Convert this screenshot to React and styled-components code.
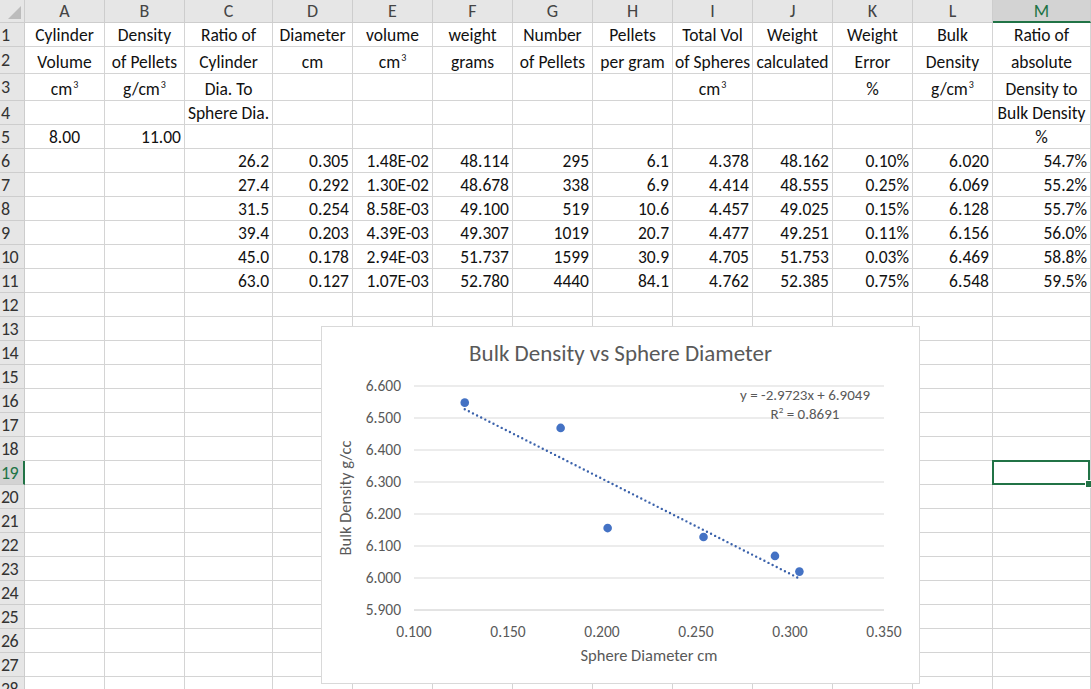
import React from 'react';
import styled, { createGlobalStyle } from 'styled-components';

const GlobalStyle = createGlobalStyle`
  html, body {
    margin: 0;
    padding: 0;
    background: #fff;
    overflow: hidden;
  }
  body {
    font-family: Carlito, Lato, "Liberation Sans", sans-serif;
  }
`;

const GREEN = '#217346';

const columns = [
  { key: 'A', w: 80 },
  { key: 'B', w: 80 },
  { key: 'C', w: 88 },
  { key: 'D', w: 80 },
  { key: 'E', w: 80 },
  { key: 'F', w: 80 },
  { key: 'G', w: 80 },
  { key: 'H', w: 80 },
  { key: 'I', w: 80 },
  { key: 'J', w: 80 },
  { key: 'K', w: 80 },
  { key: 'L', w: 80 },
  { key: 'M', w: 98 },
];

const cm3 = <>cm<sup>3</sup></>;
const gcm3 = <>g/cm<sup>3</sup></>;

// header rows: every cell centred
const headerRows = [
  ['Cylinder', 'Density', 'Ratio of', 'Diameter', 'volume', 'weight', 'Number', 'Pellets', 'Total Vol', 'Weight', 'Weight', 'Bulk', 'Ratio of'],
  ['Volume', 'of Pellets', 'Cylinder', 'cm', cm3, 'grams', 'of Pellets', 'per gram', 'of Spheres', 'calculated', 'Error', 'Density', 'absolute'],
  [cm3, gcm3, 'Dia. To', '', '', '', '', '', cm3, '', '%', gcm3, 'Density to'],
  ['', '', 'Sphere Dia.', '', '', '', '', '', '', '', '', '', 'Bulk Density'],
];

const dataRows = [
  ['26.2', '0.305', '1.48E-02', '48.114', '295', '6.1', '4.378', '48.162', '0.10%', '6.020', '54.7%'],
  ['27.4', '0.292', '1.30E-02', '48.678', '338', '6.9', '4.414', '48.555', '0.25%', '6.069', '55.2%'],
  ['31.5', '0.254', '8.58E-03', '49.100', '519', '10.6', '4.457', '49.025', '0.15%', '6.128', '55.7%'],
  ['39.4', '0.203', '4.39E-03', '49.307', '1019', '20.7', '4.477', '49.251', '0.11%', '6.156', '56.0%'],
  ['45.0', '0.178', '2.94E-03', '51.737', '1599', '30.9', '4.705', '51.753', '0.03%', '6.469', '58.8%'],
  ['63.0', '0.127', '1.07E-03', '52.780', '4440', '84.1', '4.762', '52.385', '0.75%', '6.548', '59.5%'],
];

const rowHeights = [24, 27, 27, 24, 24];

const Sheet = styled.div`
  position: relative;
  width: 1091px;
  height: 689px;
  overflow: hidden;
`;

const Row = styled.div`
  display: flex;
  height: ${p => p.$h}px;
`;

const Corner = styled.div`
  position: relative;
  flex: none;
  width: 25px;
  box-sizing: border-box;
  background: #e6e6e6;
  border-right: 1px solid #cdcdcd;
  border-bottom: 1px solid #cdcdcd;

  &::after {
    content: '';
    position: absolute;
    right: 3px;
    bottom: 3px;
    border-style: solid;
    border-width: 0 0 13px 13px;
    border-color: transparent transparent #bcbcbc transparent;
  }
`;

const ColHead = styled.div`
  flex: none;
  width: ${p => p.$w}px;
  box-sizing: border-box;
  display: flex;
  align-items: center;
  justify-content: center;
  background: ${p => (p.$active ? '#d3d3d3' : '#e6e6e6')};
  color: ${p => (p.$active ? GREEN : '#444')};
  font-size: 18px;
  border-right: 1px solid #cdcdcd;
  border-bottom: ${p => (p.$active ? `2px solid ${GREEN}` : '1px solid #cdcdcd')};
`;

const RowHead = styled.div`
  flex: none;
  width: 25px;
  box-sizing: border-box;
  display: flex;
  align-items: center;
  padding-left: 1px;
  background: ${p => (p.$active ? '#d3d3d3' : '#e6e6e6')};
  color: ${p => (p.$active ? GREEN : '#333')};
  font-size: 18px;
  letter-spacing: -0.5px;
  border-right: ${p => (p.$active ? `2px solid ${GREEN}` : '1px solid #cdcdcd')};
  border-bottom: 1px solid #cdcdcd;
  overflow: hidden;
`;

const Cell = styled.div`
  position: relative;
  flex: none;
  width: ${p => p.$w}px;
  box-sizing: border-box;
  display: flex;
  align-items: flex-end;
  justify-content: ${p => (p.$align === 'right' ? 'flex-end' : 'center')};
  padding: 0 3px 1px;
  font-size: 17.5px;
  line-height: 20px;
  color: #111;
  white-space: nowrap;
  border-right: 1px solid #d4d4d4;
  border-bottom: 1px solid #d4d4d4;

  sup {
    font-size: 10px;
    line-height: 0;
    vertical-align: 7px;
    margin-left: 1px;
  }

  ${p => p.$selected && `
    &::after {
      content: '';
      position: absolute;
      left: -1px;
      top: -1px;
      right: 0;
      bottom: -1px;
      border: 2px solid ${GREEN};
    }
    &::before {
      content: '';
      position: absolute;
      right: -3px;
      bottom: -4px;
      width: 6px;
      height: 6px;
      background: ${GREEN};
      border: 1px solid #fff;
      z-index: 1;
    }
  `}
`;

const Chart = styled.div`
  position: absolute;
  left: 321px;
  top: 326px;
  width: 599px;
  height: 358px;
  box-sizing: border-box;
  background: #fff;
  border: 1px solid #d9d9d9;
  display: flex;
  flex-direction: column;
`;

const ChartTitle = styled.div`
  height: 40px;
  padding-top: 6px;
  display: flex;
  align-items: center;
  justify-content: center;
  font-size: 23px;
  color: #595959;
`;

const Plot = styled.svg`
  display: block;
  font-family: Carlito, Lato, "Liberation Sans", sans-serif;
  fill: #595959;
`;

const points = [
  [0.305, 6.02],
  [0.292, 6.069],
  [0.254, 6.128],
  [0.203, 6.156],
  [0.178, 6.469],
  [0.127, 6.548],
];

// plot coordinates: page x - 322, page y - 373
const px = x => 92 + (x - 0.1) * 1880;
const py = y => 13 + (6.6 - y) * 320;
const trend = x => -2.9723 * x + 6.9049;

const yTicks = [6.6, 6.5, 6.4, 6.3, 6.2, 6.1, 6.0, 5.9];
const xTicks = [0.1, 0.15, 0.2, 0.25, 0.3, 0.35];

const ScatterChart = () => (
  <Chart>
    <ChartTitle>Bulk Density vs Sphere Diameter</ChartTitle>
    <Plot width="597" height="310" viewBox="0 0 597 310">
      {yTicks.map(t => (
        <g key={t}>
          <line x1="92" x2="562" y1={py(t)} y2={py(t)} stroke={t === 5.9 ? '#c8c8c8' : '#d9d9d9'} strokeWidth="1" />
          <text x="79" y={py(t) + 5} fontSize="15.5" textAnchor="end">{t.toFixed(3)}</text>
        </g>
      ))}
      {xTicks.map(t => (
        <text key={t} x={px(t)} y="264" fontSize="15.5" textAnchor="middle">{t.toFixed(3)}</text>
      ))}
      <line
        x1={px(0.127)} y1={py(trend(0.127))}
        x2={px(0.305)} y2={py(trend(0.305))}
        stroke="#3b62ab" strokeWidth="2.4" strokeLinecap="round" strokeDasharray="0 4.6"
      />
      {points.map(([x, y]) => (
        <circle key={x} cx={px(x)} cy={py(y)} r="4.3" fill="#4472c4" />
      ))}
      <text x="548" y="27" fontSize="15" textAnchor="end">y = -2.9723x + 6.9049</text>
      <text x="483" y="46" fontSize="15" textAnchor="middle">
        R<tspan dy="-6" fontSize="9">2</tspan><tspan dy="6"> = 0.8691</tspan>
      </text>
      <text x="327" y="288" fontSize="16.5" textAnchor="middle">Sphere Diameter cm</text>
      <text transform="translate(29 125) rotate(-90)" fontSize="16.5" textAnchor="middle">Bulk Density g/cc</text>
    </Plot>
  </Chart>
);

const App = () => {
  const rows = [];
  for (let n = 1; n <= 28; n++) {
    const h = rowHeights[n - 1] || 24;
    let cells;
    if (n <= 4) {
      cells = columns.map((c, i) => (
        <Cell key={c.key} $w={c.w}><span>{headerRows[n - 1][i]}</span></Cell>
      ));
    } else if (n === 5) {
      cells = columns.map(c => (
        <Cell key={c.key} $w={c.w} $align={c.key === 'B' ? 'right' : 'center'}>
          {c.key === 'A' ? '8.00' : c.key === 'B' ? '11.00' : c.key === 'M' ? '%' : ''}
        </Cell>
      ));
    } else if (n <= 11) {
      const vals = dataRows[n - 6];
      cells = columns.map((c, i) => (
        <Cell key={c.key} $w={c.w} $align="right">{i >= 2 ? vals[i - 2] : ''}</Cell>
      ));
    } else {
      cells = columns.map(c => (
        <Cell key={c.key} $w={c.w} $selected={n === 19 && c.key === 'M'} />
      ));
    }
    rows.push(
      <Row key={n} $h={h}>
        <RowHead $active={n === 19}>{n}</RowHead>
        {cells}
      </Row>
    );
  }

  return (
    <>
      <GlobalStyle />
      <Sheet>
        <Row $h={23}>
          <Corner />
          {columns.map(c => (
            <ColHead key={c.key} $w={c.w} $active={c.key === 'M'}>{c.key}</ColHead>
          ))}
        </Row>
        {rows}
        <ScatterChart />
      </Sheet>
    </>
  );
};

export default App;
